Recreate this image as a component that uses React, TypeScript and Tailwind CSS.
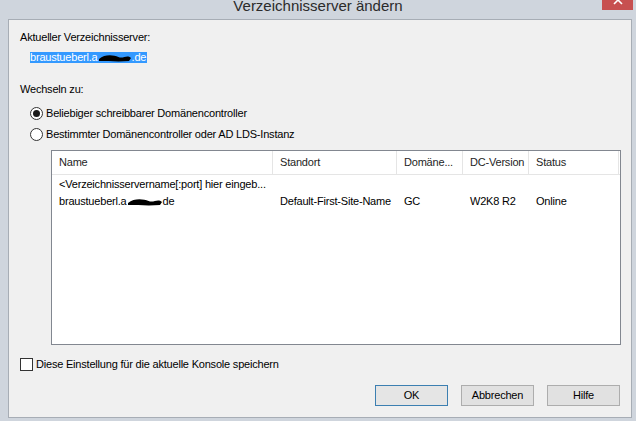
import React from "react"

const COLS = [
  { label: "Name", w: "w-[221px]" },
  { label: "Standort", w: "w-[124px]" },
  { label: "Domäne...", w: "w-[66px]" },
  { label: "DC-Version", w: "w-[66px]" },
  { label: "Status", w: "w-[90px]" },
]

// Schwarzer Schwärzungs-Kritzel über dem Domänennamen
function Scribble({ w }: { w: number }) {
  return (
    <svg width={w} height="9" viewBox={`0 0 ${w} 9`} className="inline-block align-[-1px]">
      <path
        d={`M1 6 C ${w * 0.2} 1, ${w * 0.45} 2, ${w * 0.6} 4 S ${w * 0.85} 1, ${w - 1} 5 L ${w - 3} 8 C ${w * 0.6} 9, ${w * 0.3} 8, 1 8 Z`}
        fill="#000"
      />
    </svg>
  )
}

function Radio({ checked }: { checked?: boolean }) {
  return (
    <span className="flex h-[13px] w-[13px] items-center justify-center rounded-full border border-[#333] bg-white">
      {checked && <span className="block h-[7px] w-[7px] rounded-full bg-[#1a1a1a]" />}
    </span>
  )
}

function Button({ children, primary }: { children: React.ReactNode; primary?: boolean }) {
  return (
    <button
      type="button"
      className={
        primary
          ? "h-[21px] w-[73px] border border-[#3c7fb1] bg-[#e5e5e5] text-[11px] leading-[19px] text-black"
          : "h-[21px] w-[73px] border border-[#adadad] bg-[#e1e1e1] text-[11px] leading-[19px] text-black"
      }
    >
      {children}
    </button>
  )
}

export default function App() {
  return (
    <div className="relative h-[421px] w-[636px] overflow-hidden bg-[#cfd5dd] font-['Liberation_Sans',Arial,sans-serif] text-[11px] tracking-[-0.2px] text-black">
      {/* Titelleiste */}
      <div className="flex h-[19px] justify-center">
        <span className="-mt-[3px] text-[15px] leading-[17px] tracking-normal text-[#2b2b2b]">
          Verzeichnisserver ändern
        </span>
      </div>
      <div className="absolute right-[3px] top-0 h-[10px] w-[31px] bg-[#c75050]">
        <svg width="31" height="10" viewBox="0 0 31 10">
          <path d="M12 4 L20 -4 M20 4 L12 -4" stroke="#fff" strokeWidth="1.6" />
        </svg>
      </div>

      {/* Client-Bereich */}
      <div className="ml-[8px] mr-[4px] flex h-[399px] flex-col border border-[#a7adb5] bg-[#f0f0f0] pl-[11px] pr-[11px] pt-[10px]">
        <div className="h-[14px] leading-[14px]">Aktueller Verzeichnisserver:</div>
        <div className="ml-[10px] mt-[8px] flex">
          <span className="flex h-[11px] items-center bg-[#3399ff] pr-[1px] leading-[11px] text-white">
            braustueberl.a<Scribble w={34} />
            .de
          </span>
        </div>

        <div className="mt-[19px] h-[14px] leading-[14px]">Wechseln zu:</div>
        <div className="ml-[10px] mt-[10px] flex h-[14px] items-center gap-[3px]">
          <Radio checked />
          <span>Beliebiger schreibbarer Domänencontroller</span>
        </div>
        <div className="ml-[10px] mt-[7px] flex h-[14px] items-center gap-[3px]">
          <Radio />
          <span>Bestimmter Domänencontroller oder AD LDS-Instanz</span>
        </div>

        {/* Liste */}
        <div className="ml-[31px] mt-[9px] h-[195px] w-[570px] border border-[#828790] bg-white">
          <div className="flex h-[24px] border-b border-[#e5e5e5]">
            {COLS.map((c) => (
              <div
                key={c.label}
                className={`${c.w} flex items-center border-r border-[#e5e5e5] pl-[7px] text-[#1e1e1e]`}
              >
                {c.label}
              </div>
            ))}
          </div>
          <div className="mt-[1px] flex h-[17px] items-center pl-[7px]">
            &lt;Verzeichnisservername[:port] hier eingeb...
          </div>
          <div className="flex h-[17px] items-center">
            <div className="flex w-[221px] items-center pl-[7px]">
              braustueberl.a<Scribble w={36} />
              de
            </div>
            <div className="w-[124px] pl-[7px]">Default-First-Site-Name</div>
            <div className="w-[66px] pl-[7px]">GC</div>
            <div className="w-[66px] pl-[7px]">W2K8 R2</div>
            <div className="w-[90px] pl-[7px]">Online</div>
          </div>
        </div>

        <div className="mt-[13px] flex h-[13px] items-center gap-[3px]">
          <span className="block h-[13px] w-[13px] border border-[#333] bg-white" />
          <span>Diese Einstellung für die aktuelle Konsole speichern</span>
        </div>

        <div className="mt-[14px] flex justify-end gap-[13px]">
          <Button primary>OK</Button>
          <Button>Abbrechen</Button>
          <Button>Hilfe</Button>
        </div>
      </div>
    </div>
  )
}
